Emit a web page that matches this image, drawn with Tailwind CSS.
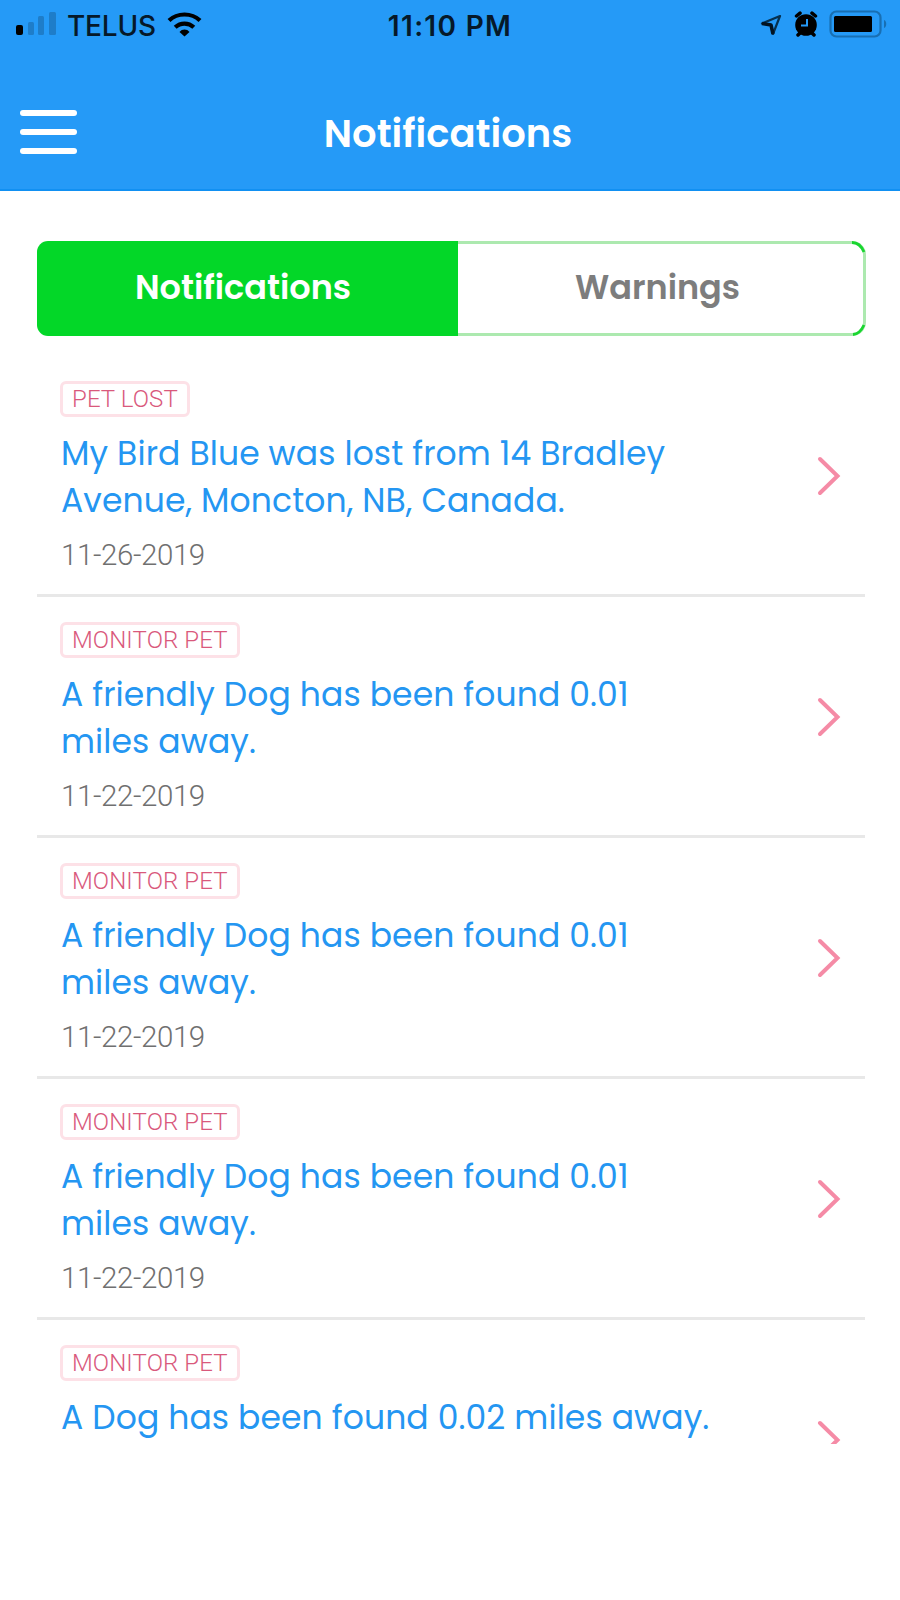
<!DOCTYPE html>
<html lang="en">
<head>
    <meta charset="UTF-8">
    <meta name="viewport" content="width=device-width, initial-scale=1.0">
    <title>Notifications</title>
    <script src="https://cdn.jsdelivr.net/npm/@tailwindcss/browser@4"></script>
</head>
<style>
    body {
        font-family: Poppins, Inter, sans-serif;
    }
</style>
<body class="bg-white w-[900px] h-[1600px] overflow-hidden">
    <header class="bg-[#259af7] h-[191px] border-b-2 border-[#1190f2]">
        <!-- Status bar -->
        <div class="grid grid-cols-3 items-center h-[50px] pl-4 pr-3 font-[Inter] text-[#06192a]">
            <div class="flex items-center">
                <svg class="w-[42px] h-[26px]" viewBox="0 0 42 26">
                    <rect x="0" y="13" width="7" height="10" rx="2" fill="#000"/>
                    <rect x="12" y="10" width="6" height="13" rx="1.5" fill="#1e7dc9"/>
                    <rect x="22" y="4" width="6" height="19" rx="1.5" fill="#1e7dc9"/>
                    <rect x="33" y="0" width="7" height="23" rx="1.5" fill="#1e7dc9"/>
                </svg>
                <span class="ml-[9px] w-[100px] mt-px text-[28px] leading-none font-medium tracking-[-0.2px] whitespace-nowrap">TELUS</span>
                <svg class="w-[35px] h-[26px]" viewBox="0 0 35 26" fill="none" stroke="#000" stroke-width="4.2">
                    <path d="M2 8.500C10.500 0.500 24.500 0.500 33 8.500"/>
                    <path d="M8.200 15.300C13.500 10.300 21.500 10.300 26.800 15.300"/>
                    <path d="M17.500 24.500L12.500 20C15 16.700 20 16.700 22.500 20Z" fill="#000" stroke="none"/>
                </svg>
            </div>
            <div class="mt-px pr-[4px] text-center text-[28px] leading-none font-semibold tracking-[1.3px] whitespace-nowrap">11:10 PM</div>
            <div class="flex items-center justify-end">
                <svg class="w-[22px] h-[22px]" viewBox="0 0 22 22" fill="none" stroke="#06304f" stroke-width="2.200" stroke-linejoin="round">
                    <path d="M20 2L2 9.500L11 11L13 20Z"/>
                    <path d="M2 9.500L11 11L13 20" stroke="#021322" stroke-width="3.500"/>
                </svg>
                <svg class="ml-[12px] mb-[3px] w-[24px] h-[26px]" viewBox="0 0 24 26">
                    <circle cx="12" cy="14" r="10.800"/>
                    <path d="M2.500 5L6 2.200M21.500 5L18 2.200M4 24L7 21M20 24L17 21" stroke="#000" stroke-width="3.500" stroke-linecap="round"/>
                    <path d="M13 8V14.500H7" fill="none" stroke="#259af7" stroke-width="2"/>
                </svg>
                <svg class="ml-[10px] mb-[2px] w-[60px] h-[28px]" viewBox="0 0 60 28">
                    <rect x="2.500" y="1.500" width="50" height="25" rx="6" fill="none" stroke="#186fb3" stroke-width="2.200"/>
                    <rect x="6" y="6" width="38" height="16" rx="1.500"/>
                    <path d="M56 10C59 11 59 17 56 18Z" fill="#186fb3"/>
                </svg>
            </div>
        </div>
        <!-- Title bar -->
        <div class="grid grid-cols-[1fr_auto_1fr] items-center h-[139px] pt-[25px] px-[20px]">
            <button class="flex flex-col gap-[13px] w-[57px]">
                <span class="w-full h-[6px] rounded-sm bg-white"></span>
                <span class="w-full h-[6px] rounded-sm bg-white"></span>
                <span class="w-full h-[6px] rounded-sm bg-white"></span>
            </button>
            <h1 class="text-[38.5px] leading-none font-semibold text-white mt-[4px] -translate-x-[2px]">Notifications</h1>
        </div>
    </header>

    <!-- Tabs -->
    <div class="flex h-[95px] mt-[50px] ml-[37px] w-[829px] text-[33.5px] font-semibold">
        <button class="w-[421px] rounded-l-[11px] bg-[#03d728] pr-[9px] text-white">Notifications</button>
        <button class="relative flex-1 rounded-r-[14px] border-[3px] border-l-0 border-[#ace9af] pr-[6px] text-[#7d7d7d]">
            Warnings
            <svg class="absolute -top-[3px] -right-[3px] w-[16px] h-[16px]" viewBox="0 0 16 16" fill="none" stroke="#19d630" stroke-width="2.800">
                <path d="M2 1.500Q10 1.500 14 11"/>
            </svg>
            <svg class="absolute -bottom-[3px] -right-[3px] w-[16px] h-[16px]" viewBox="0 0 16 16" fill="none" stroke="#19d630" stroke-width="2.800">
                <path d="M3 14.500Q10 14 14 5"/>
            </svg>
        </button>
    </div>

    <!-- Each row is as tall as a two-line message, the last one is cut off -->
    <main id="list" class="mt-[20px] ml-[37px] w-[828px] h-[1088px] overflow-hidden"></main>

    <script>
        const notifications = [
            { type: 'PET LOST', lines: ['My Bird Blue was lost from 14 Bradley', 'Avenue, Moncton, NB, Canada.'], date: '11-26-2019' },
            { type: 'MONITOR PET', lines: ['A friendly Dog has been found 0.01', 'miles away.'], date: '11-22-2019' },
            { type: 'MONITOR PET', lines: ['A friendly Dog has been found 0.01', 'miles away.'], date: '11-22-2019' },
            { type: 'MONITOR PET', lines: ['A friendly Dog has been found 0.01', 'miles away.'], date: '11-22-2019' },
            { type: 'MONITOR PET', lines: ['A Dog has been found 0.02 miles away.'], date: '' }
        ];

        const list = document.getElementById('list');
        notifications.forEach(item => {
            const row = document.createElement('div');
            row.className = 'flex items-center justify-between h-[241px] border-b-[3px] border-[#e8e8e8] pl-[23px] pr-[24px]';
            row.innerHTML = `
                <div class="h-full pt-[25px]">
                    <div class="inline-flex items-center h-[36px] px-[9px] border-[3px] border-[#fde1e7] rounded-[6px] font-[Roboto] font-light text-[24px] tracking-[0.1px] text-[#d9597c] align-top whitespace-nowrap">${item.type}</div>
                    <div class="mt-[13px] pl-px text-[33px] leading-[47px] tracking-[0.1px] text-[#2496f2] whitespace-nowrap">
                        ${item.lines.map(line => `<div>${line}</div>`).join('')}
                    </div>
                    <div class="mt-[13px] pl-px font-[Roboto] font-light text-[29.5px] leading-[36px] tracking-[-0.4px] text-[#707070]">${item.date}</div>
                </div>
                <svg class="shrink-0 w-[24px] h-[42px] mt-px" viewBox="0 0 24 42" fill="none" stroke="#f58ba6" stroke-width="4" stroke-linecap="round">
                    <path d="M3 4L20.500 21L3 38"/>
                </svg>
            `;
            list.appendChild(row);
        });
    </script>
</body>
</html>
